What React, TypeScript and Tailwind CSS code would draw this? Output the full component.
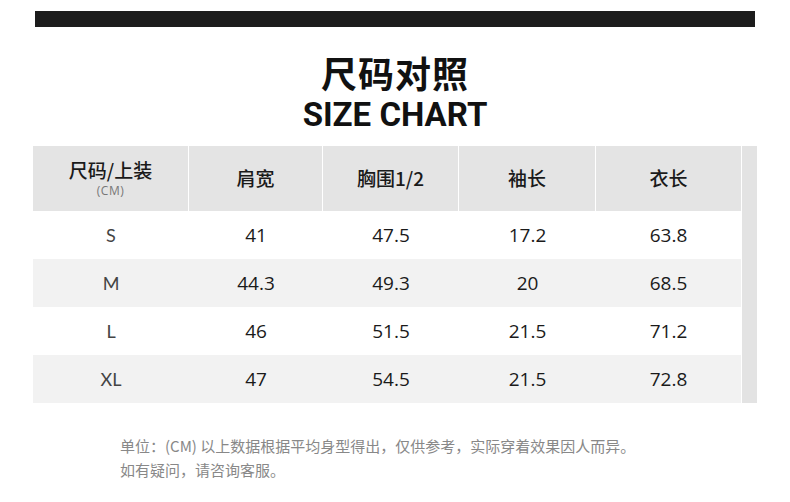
const headers = [
  { label: '肩宽', w: 'w-[134px]' },
  { label: '胸围1/2', w: 'w-[136px]' },
  { label: '袖长', w: 'w-[137px]' },
  { label: '衣长', w: 'w-[145px]' },
];

const rows = [
  { size: 'S', values: ['41', '47.5', '17.2', '63.8'] },
  { size: 'M', values: ['44.3', '49.3', '20', '68.5'] },
  { size: 'L', values: ['46', '51.5', '21.5', '71.2'] },
  { size: 'XL', values: ['47', '54.5', '21.5', '72.8'] },
];

const colWidths = ['w-[134px]', 'w-[136px]', 'w-[137px]', 'w-[145px]'];

export default function App() {
  return (
    <div className="w-[790px] h-[502px] bg-white overflow-hidden font-['Noto_Sans_CJK_SC',sans-serif]">
      {/* top black bar */}
      <div className="mx-[35px] mt-[11px] h-[16px] bg-[#1c1c1c]" />

      {/* title */}
      <div className="flex flex-col items-center mt-[25px]">
        <h1 className="text-[36px] leading-[40px] font-bold text-[#111] tracking-[1px]">尺码对照</h1>
        <h2 className="mt-[6px] text-[33px] leading-[34px] font-bold text-[#111] font-['Roboto','Noto_Sans_CJK_SC',sans-serif]">
          SIZE CHART
        </h2>
      </div>

      {/* table */}
      <div className="flex ml-[33px] mt-[14px] w-[724px]">
        <div className="w-[708px]">
          <div className="flex h-[65px] bg-[#e4e4e4] text-[#1a1a1a]">
            <div className="w-[156px] border-r border-white flex flex-col items-center justify-center">
              <span className="text-[19px] leading-[20px] font-medium">尺码/上装</span>
              <span className="mt-[4px] text-[12px] leading-[13px] text-[#777] font-['Open_Sans',sans-serif] tracking-[0.5px]">(CM)</span>
            </div>
            {headers.map((h, i) => (
              <div
                key={h.label}
                className={`${h.w} ${i < headers.length - 1 ? 'border-r border-white' : ''} flex items-center justify-center text-[19px] font-medium`}
              >
                {h.label}
              </div>
            ))}
          </div>
          {rows.map((r, i) => (
            <div key={r.size} className={`flex h-[48px] items-center ${i % 2 === 1 ? 'bg-[#f2f2f2]' : 'bg-white'}`}>
              <div className="w-[156px] text-center text-[18px] font-normal text-[#444] font-['Lato',sans-serif]">
                {r.size}
              </div>
              {r.values.map((v, j) => (
                <div
                  key={j}
                  className={`${colWidths[j]} text-center text-[19px] font-medium text-[#1a1a1a] font-['Open_Sans',sans-serif]`}
                >
                  {v}
                </div>
              ))}
            </div>
          ))}
        </div>
        <div className="ml-px w-[15px] bg-[#e3e3e3]" />
      </div>

      {/* note */}
      <div className="ml-[120px] mt-[31px] text-[15px] leading-[24px] text-[#888]">
        <p>单位：(CM) 以上数据根据平均身型得出，仅供参考，实际穿着效果因人而异。</p>
        <p>如有疑问，请咨询客服。</p>
      </div>
    </div>
  );
}
